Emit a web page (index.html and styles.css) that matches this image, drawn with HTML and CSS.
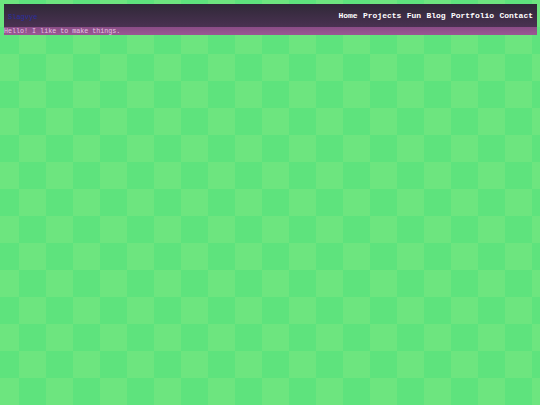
FILE: index.html
```html
<!DOCTYPE html>
<html>
<head>
<meta charset="utf-8">
<link rel="stylesheet" href="styles.css">
</head>
<body>
<header class="site-header">
  <div class="bar">
    <span class="logo">Slagvye</span>
    <nav class="nav">
      <a href="#">Home</a>
      <a href="#">Projects</a>
      <a href="#">Fun</a>
      <a href="#">Blog</a>
      <a href="#">Portfolio</a>
      <a href="#">Contact</a>
    </nav>
  </div>
  <div class="tagline">Hello! I like to make things.</div>
</header>
</body>
</html>
```
FILE: styles.css
```css
html, body {
  margin: 0;
  height: 100%;
}
body {
  background-color: #62e47e;
  background-image: conic-gradient(#5ee37d 0 25%, #6de57f 0 50%, #5ee37d 0 75%, #6de57f 0);
  background-size: 54px 54px;
  background-position: -8px 0;
  font-family: "Liberation Mono", "DejaVu Sans Mono", monospace;
}
.site-header {
  margin: 4px 3px 0 4px;
}
.bar {
  height: 23px;
  display: flex;
  align-items: center;
  justify-content: space-between;
  padding: 0 4px 0 4px;
  background: linear-gradient(#2f2937, #4a3152);
}
.logo {
  font-size: 7px;
  color: #2a2ea0;
  margin-top: 2px;
}
.nav {
  display: flex;
  gap: 5.3px;
  margin-top: -1px;
}
.nav a {
  color: #ffffff;
  text-decoration: none;
  font-weight: bold;
  font-size: 8px;
}
.tagline {
  height: 8px;
  line-height: 8px;
  font-size: 6.7px;
  color: #e6c3e4;
  background: linear-gradient(#8a4c86, #9a5893);
}
```
